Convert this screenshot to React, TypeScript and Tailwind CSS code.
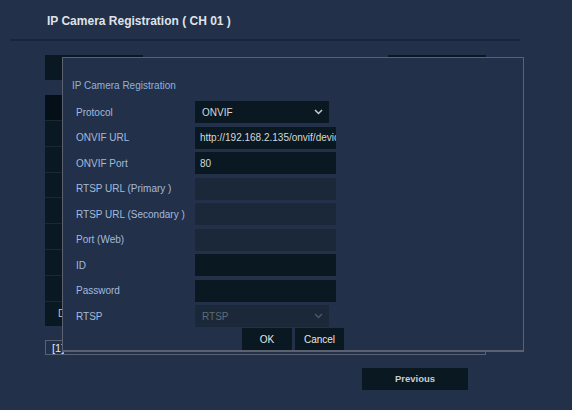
import React from "react";

const font = { fontFamily: '"Liberation Sans", Arial, sans-serif' };

type Field = {
  label: string;
  kind: "select" | "input" | "disabled" | "disabledSelect";
  value?: string;
};

const fields: Field[] = [
  { label: "Protocol", kind: "select", value: "ONVIF" },
  { label: "ONVIF URL", kind: "input", value: "http://192.168.2.135/onvif/device_service" },
  { label: "ONVIF Port", kind: "input", value: "80" },
  { label: "RTSP URL (Primary )", kind: "disabled" },
  { label: "RTSP URL (Secondary )", kind: "disabled" },
  { label: "Port (Web)", kind: "disabled" },
  { label: "ID", kind: "input" },
  { label: "Password", kind: "input" },
  { label: "RTSP", kind: "disabledSelect", value: "RTSP" },
];

const Chevron = ({ color }: { color: string }) => (
  <svg width="9" height="6" viewBox="0 0 9 6" fill="none">
    <path d="M1 1l3.5 3.5L8 1" stroke={color} strokeWidth="1.5" />
  </svg>
);

const FieldControl = ({ field }: { field: Field }) => {
  if (field.kind === "select" || field.kind === "disabledSelect") {
    const disabled = field.kind === "disabledSelect";
    return (
      <div
        className={`flex h-[22px] w-[134px] items-center justify-between pl-[7px] pr-[6px] text-[10px] ${
          disabled ? "bg-[#1b2839] text-[#5f6b78]" : "bg-[#0a1821] text-[#d4d8dc]"
        }`}
      >
        <span>{field.value}</span>
        <Chevron color={disabled ? "#4a5766" : "#c8ccd2"} />
      </div>
    );
  }
  return (
    <div
      className={`flex h-[22px] w-[141px] items-center overflow-hidden whitespace-nowrap pl-[5px] text-[10px] text-[#d4d8dc] ${
        field.kind === "disabled" ? "bg-[#1b2839]" : "bg-[#0a1821]"
      }`}
    >
      {field.value}
    </div>
  );
};

export default function App() {
  return (
    <div className="relative h-[410px] w-[572px] overflow-hidden bg-[#22304a]" style={font}>
      <div className="pl-[47px] pt-[12px] text-[12px] font-bold text-[#dfe3e8]">
        IP Camera Registration ( CH 01 )
      </div>
      <div className="ml-[10px] mt-[9px] h-[2px] w-[510px] bg-[#19253a]" />

      <div className="ml-[45px] mt-[14px] w-[441px]">
        <div className="flex justify-between">
          <div className="h-[25px] w-[98px] bg-[#0a1821]" />
          <div className="h-[25px] w-[98px] bg-[#0a1821]" />
        </div>
        <div className="mt-[15px] flex flex-col bg-[#0a1821]">
          <div className="h-[25px] bg-[#050f17]" />
          {["", "", "", "", "", "", "", "D"].map((t, i) => (
            <div
              key={i}
              className="flex h-[25.8px] items-center border-t border-[#1a2836] pl-[13px] text-[10px] text-[#c0c4c8]"
            >
              {t}
            </div>
          ))}
        </div>
        <div className="mt-[14px] flex h-[15px] items-center border border-[#5b6170] pl-[6px] text-[11px] text-[#e4e6ea]">
          [1]
        </div>
      </div>

      <div className="ml-[362px] mt-[13px] flex h-[22px] w-[106px] items-center justify-center bg-[#0a1821] text-[9.5px] font-bold text-[#c8ccd2]">
        Previous
      </div>

      <div className="absolute left-[62px] top-[57px] h-[295px] w-[462px] border border-b-2 border-[#5b6170] bg-[#22304a]">
        <div className="pl-[9px] pt-[22px] text-[10px] leading-[12px] text-[#8fb3de]">
          IP Camera Registration
        </div>
        <div className="mt-[9px] flex flex-col gap-[3.5px] pl-[13px]">
          {fields.map((f) => (
            <div key={f.label} className="flex h-[22px] items-center">
              <div className="w-[119px] whitespace-nowrap text-[10px] text-[#a2bbdd]">{f.label}</div>
              <FieldControl field={f} />
            </div>
          ))}
        </div>
        <div className="ml-[179px] mt-[1px] flex gap-[3px]">
          <div className="flex h-[22px] w-[50px] items-center justify-center bg-[#0a1821] text-[10px] text-[#e4e6ea]">
            OK
          </div>
          <div className="flex h-[22px] w-[49px] items-center justify-center bg-[#0a1821] text-[10px] text-[#e4e6ea]">
            Cancel
          </div>
        </div>
      </div>
    </div>
  );
}
